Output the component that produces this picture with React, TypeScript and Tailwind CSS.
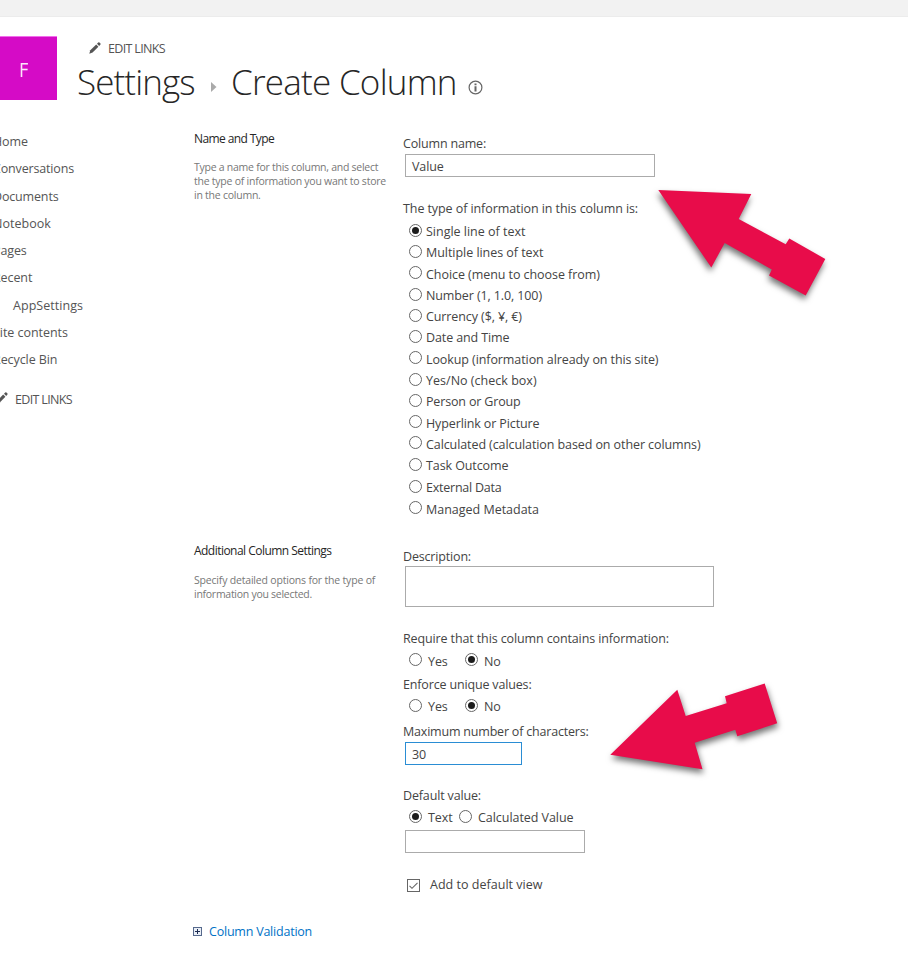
import type { ReactNode } from 'react';

const textBase = 'block h-[18px] whitespace-nowrap text-[12.5px] leading-[20px]';

function Text({ children, className = 'tracking-[-0.1px]' }: { children: ReactNode; className?: string }) {
  return <span className={`${textBase} ${className}`}>{children}</span>;
}

function Radio({ checked = false, className = 'mt-[2px]' }: { checked?: boolean; className?: string }) {
  return (
    <svg className={`block h-[13px] w-[13px] shrink-0 ${className}`} viewBox="0 0 13 13">
      <circle cx="6.5" cy="6.5" r="6" fill="#fff" stroke="#666" strokeWidth="1" />
      {checked && <circle cx="6.5" cy="6.5" r="3.5" fill="#1c1c1c" />}
    </svg>
  );
}

function Pencil({ className = '' }: { className?: string }) {
  return (
    <svg className={`block h-[12px] w-[12px] shrink-0 ${className}`} viewBox="0 0 12 12" fill="#555">
      <path d="M0.3 11.7 L1.3 8.3 L7.2 2.5 L9.4 4.7 L3.6 10.6 Z" />
      <path d="M8 1.7 L9.2 0.6 Q10 0 10.8 0.8 L11.3 1.3 Q12 2 11.3 2.8 L10.2 3.9 Z" />
    </svg>
  );
}

const types = [
  { label: 'Single line of text', row: 'h-[21px]', text: 'tracking-[-0.01px]', checked: true },
  { label: 'Multiple lines of text', row: 'h-[21px]', text: 'tracking-[-0.04px]' },
  { label: 'Choice (menu to choose from)', row: 'h-[22px]', text: 'pt-px tracking-[-0.06px]' },
  { label: 'Number (1, 1.0, 100)', row: 'h-[21px]', text: 'tracking-[-0.11px]' },
  { label: 'Currency ($, ¥, €)', row: 'h-[21px]', text: 'tracking-[-0.1px]' },
  { label: 'Date and Time', row: 'h-[21px]', text: 'tracking-[-0.11px]' },
  { label: 'Lookup (information already on this site)', row: 'h-[22px]', text: 'pt-px tracking-[-0.09px]' },
  { label: 'Yes/No (check box)', row: 'h-[21px]', text: 'tracking-[0.02px]' },
  { label: 'Person or Group', row: 'h-[21px]', text: 'tracking-[-0.16px]' },
  { label: 'Hyperlink or Picture', row: 'h-[21px]', text: 'pt-px tracking-[-0.12px]' },
  { label: 'Calculated (calculation based on other columns)', row: 'h-[22px]', text: 'pt-px tracking-[-0.09px]' },
  { label: 'Task Outcome', row: 'h-[22px]', text: 'tracking-[-0.09px]' },
  { label: 'External Data', row: 'h-[21px]', text: 'tracking-[-0.23px]' },
  { label: 'Managed Metadata', row: 'h-[20px]', text: 'pt-px tracking-[-0.01px]' },
];

const nav = [
  { label: 'Home', row: 'h-[27px]', text: 'tracking-[-0.1px]' },
  { label: 'Conversations', row: 'h-[28px]', text: 'tracking-[-0.16px]' },
  { label: 'Documents', row: 'h-[27px]', text: 'tracking-[-0.16px]' },
  { label: 'Notebook', row: 'h-[27px]', text: 'tracking-[0.02px]' },
  { label: 'Pages', row: 'h-[27px]', text: 'tracking-[-0.1px]' },
  { label: 'Recent', row: 'h-[28px]', text: 'tracking-[-0.1px]' },
  { label: 'AppSettings', row: 'h-[27px] pl-[20px]', text: 'tracking-[0.04px]' },
  { label: 'Site contents', row: 'h-[27px]', text: 'tracking-[-0.05px]' },
  { label: 'Recycle Bin', row: 'h-[27px]', text: 'tracking-[-0.08px]' },
];

function YesNo({ className, radio }: { className: string; radio: string }) {
  return (
    <div className={`flex items-start pl-[6px] ${className}`}>
      <Radio className={radio} />
      <div className="ml-[6px] w-[37px]"><Text>Yes</Text></div>
      <Radio checked className={radio} />
      <div className="ml-[6px]"><Text>No</Text></div>
    </div>
  );
}

function Arrow({ points, className }: { points: string; className: string }) {
  return (
    <svg className={`pointer-events-none absolute top-0 left-0 ${className}`} width="908" height="959" viewBox="0 0 908 959">
      <polygon points={points} fill="#e80c4a" />
    </svg>
  );
}

export default function App() {
  return (
    <div className="relative h-[959px] w-[908px] overflow-hidden bg-white font-['Open_Sans','Noto_Sans',sans-serif] text-[#444]">
      <div className="h-[17px] border-b border-[#ececec] bg-[#f2f2f2]" />

      <header className="flex h-[101px]">
        <div className="mt-[19px] flex h-[64px] w-[57px] items-center border-t border-[#f26cec] bg-[#d50bc6] pt-[2px] pl-[19px] text-[20px] text-white/90">
          <span className="block origin-left scale-x-90">F</span>
        </div>
        <div className="ml-[21px] pt-[22px]">
          <div className="flex items-start pl-[11px] text-[#555]">
            <Pencil className="mt-[3px]" />
            <Text className="ml-[7px] tracking-[-0.66px]">EDIT LINKS</Text>
          </div>
          <h1 className="flex items-start text-[35px] leading-[50px] font-light text-[#262626]">
            <span className="-ml-px w-[134px] whitespace-nowrap tracking-[-0.9px]">Settings</span>
            <svg className="mt-[25px] h-[10px] w-[6px]" viewBox="0 0 6 10"><path d="M0 0 L5.5 5 L0 10Z" fill="#aaa" /></svg>
            <span className="ml-[14px] w-[240px] whitespace-nowrap tracking-[-0.75px]">Create Column</span>
            <svg className="-ml-[3px] mt-[23px] h-[15px] w-[15px]" viewBox="0 0 15 15">
              <circle cx="7.5" cy="7.5" r="6.4" fill="none" stroke="#666" strokeWidth="1.2" />
              <path d="M6.5 3.5h2v1.7h-2zM6.5 6.3h2v5.2h-2z" fill="#666" />
            </svg>
          </h1>
        </div>
      </header>

      <div className="flex">
        <nav className="w-[194px] pt-[14px] text-[#555]">
          <div className="-ml-[7px]">
            {nav.map((n) => (
              <div key={n.label} className={n.row}><Text className={n.text}>{n.label}</Text></div>
            ))}
            <div className="mt-[13px] flex items-start pl-[3px]">
              <Pencil className="mt-[2px]" />
              <Text className="ml-[7px] tracking-[-0.66px]">EDIT LINKS</Text>
            </div>
          </div>
        </nav>

        <main>
          <section className="flex h-[418px]">
            <div className="w-[209px] pt-[11px]">
              <h3 className="h-[18px] text-[12px] leading-[20px] tracking-[-0.6px] text-[#262626]">Name and Type</h3>
              <p className="mt-[13px] text-[10.5px] leading-[14px] whitespace-nowrap text-[#777]">
                <span className="block tracking-[-0.26px]">Type a name for this column, and select</span>
                <span className="block tracking-[-0.24px]">the type of information you want to store</span>
                <span className="block tracking-[-0.24px]">in the column.</span>
              </p>
            </div>
            <div className="pt-[16px]">
              <div className="h-[20px]"><Text className="tracking-[-0.18px]">Column name:</Text></div>
              <div className="ml-[2px] h-[23px] w-[250px] border border-[#ababab] pt-[2px] pl-[6px]"><Text>Value</Text></div>
              <div className="mt-[22px]"><Text className="tracking-[-0.08px]">The type of information in this column is:</Text></div>
              <div className="mt-[5px] pl-[6px]">
                {types.map((t) => (
                  <div key={t.label} className={`flex items-start ${t.row}`}>
                    <Radio checked={t.checked} />
                    <Text className={`ml-[4px] ${t.text}`}>{t.label}</Text>
                  </div>
                ))}
              </div>
            </div>
          </section>

          <section className="flex h-[386px]">
            <div className="w-[209px] pt-[5px]">
              <h3 className="h-[18px] text-[12px] leading-[20px] tracking-[-0.53px] text-[#262626]">Additional Column Settings</h3>
              <p className="mt-[14px] text-[10.5px] leading-[14px] whitespace-nowrap text-[#777]">
                <span className="block tracking-[-0.19px]">Specify detailed options for the type of</span>
                <span className="block tracking-[-0.27px]">information you selected.</span>
              </p>
            </div>
            <div className="pt-[11px]">
              <div className="h-[19px]"><Text className="tracking-[-0.17px]">Description:</Text></div>
              <div className="ml-[2px] h-[41px] w-[309px] border border-[#ababab]" />
              <div className="mt-[22px]"><Text className="tracking-[-0.12px]">Require that this column contains information:</Text></div>
              <YesNo className="mt-[5px]" radio="mt-[1px]" />
              <div className="mt-[5px]"><Text className="tracking-[-0.16px]">Enforce unique values:</Text></div>
              <YesNo className="mt-[4px]" radio="mt-[2px]" />
              <div className="mt-[7px]"><Text className="tracking-[-0.2px]">Maximum number of characters:</Text></div>
              <div className="mt-[2px] ml-[2px] h-[23px] w-[117px] border border-[#2a8dd4] pt-[2px] pl-[6px]"><Text>30</Text></div>
              <div className="mt-[21px]"><Text className="tracking-[-0.15px]">Default value:</Text></div>
              <div className="mt-[4px] flex items-start pl-[6px]">
                <Radio checked />
                <div className="ml-[6px] w-[31px]"><Text>Text</Text></div>
                <Radio />
                <Text className="ml-[6px] tracking-[-0.05px]">Calculated Value</Text>
              </div>
              <div className="mt-[4px] ml-[2px] h-[23px] w-[180px] border border-[#ababab]" />
              <div className="mt-[22px] flex items-start pl-[4px]">
                <svg className="mt-[4px] h-[13px] w-[13px]" viewBox="0 0 13 13" fill="none">
                  <rect x="0.5" y="0.5" width="12" height="12" stroke="#666" />
                  <path d="M2.5 6.8 L5 9.3 L10.5 3.8" stroke="#666" strokeWidth="1.1" />
                </svg>
                <Text className="ml-[10px] tracking-[0.02px]">Add to default view</Text>
              </div>
            </div>
          </section>

          <div className="-ml-px flex items-start text-[#0072c6]">
            <svg className="mt-[5px] h-[9px] w-[9px]" viewBox="0 0 9 9" fill="none">
              <rect x="0.5" y="0.5" width="8" height="8" fill="#e9eef6" stroke="#56698c" />
              <path d="M2 4.5h5M4.5 2v5" stroke="#1c2c52" />
            </svg>
            <Text className="ml-[7px] tracking-[-0.22px]">Column Validation</Text>
          </div>
        </main>
      </div>

      <Arrow
        className="drop-shadow-[-1px_4px_3px_rgba(0,0,0,0.55)]"
        points="658.3,190 751.3,194 738.7,219 785.7,244.3 789.3,238.5 825.3,259 805.7,295.5 769,275.5 771.8,269.5 724.7,243 711.3,267.5"
      />
      <Arrow
        className="drop-shadow-[1px_4px_3px_rgba(0,0,0,0.55)]"
        points="610.3,754.7 677.3,689.7 685.7,716 726.7,703.3 725,696.3 764.7,683.5 777.2,723.3 737.3,736.2 735.3,729.8 694.7,742.7 702.5,769.2"
      />
    </div>
  );
}
